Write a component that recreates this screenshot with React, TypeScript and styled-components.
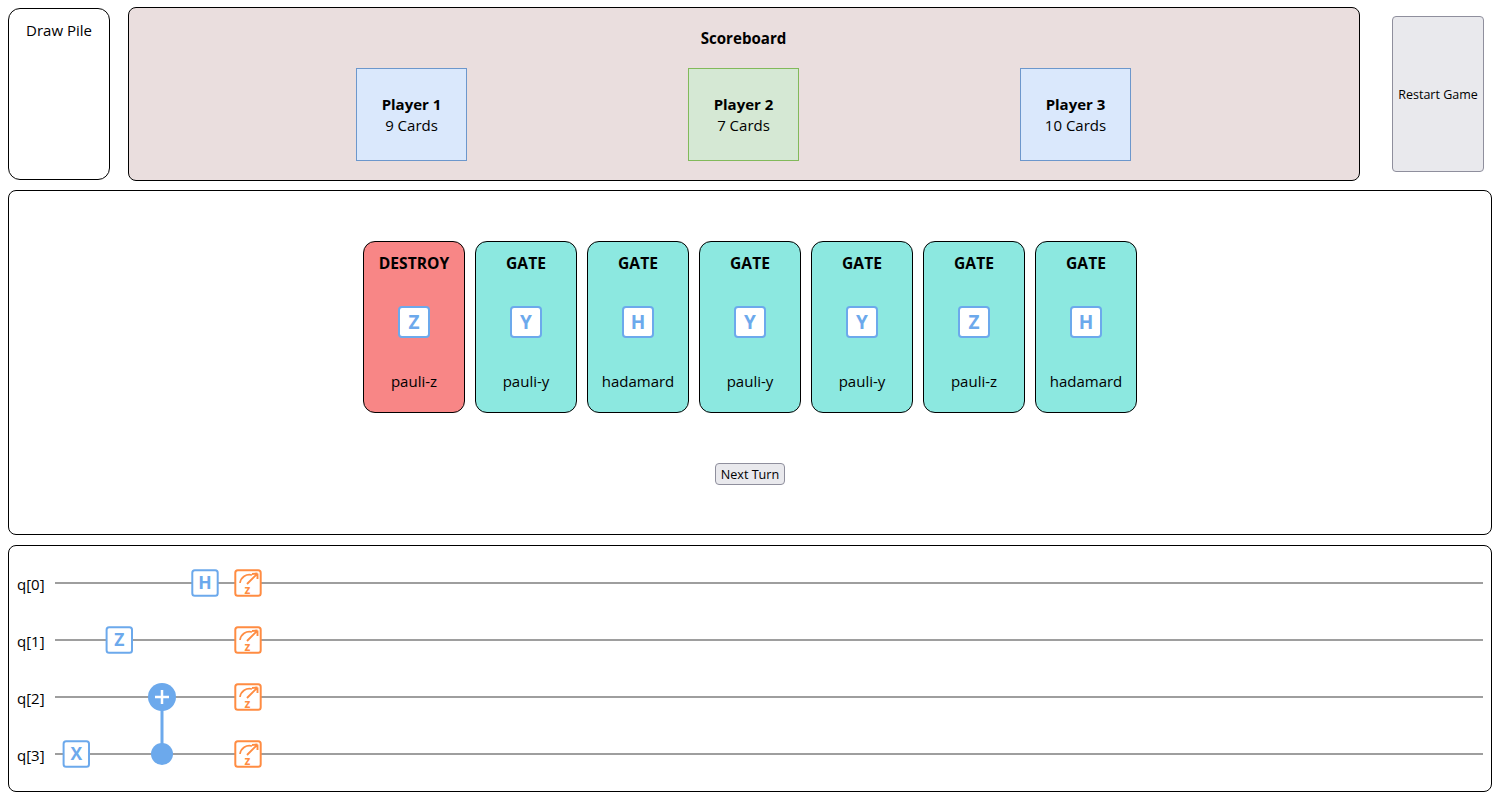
import React from "react";
import styled, { createGlobalStyle } from "styled-components";

const FONT = `"Open Sans", "Noto Sans", "Liberation Sans", sans-serif`;

const Global = createGlobalStyle`
  html, body { margin: 0; padding: 0; background: #fff; }
  body { font-family: ${FONT}; color: #000; }
  * { box-sizing: border-box; }
`;

const Page = styled.div`
  width: 1500px;
  height: 800px;
  padding: 7px 8px 8px;
  display: flex;
  flex-direction: column;
  overflow: hidden;
`;

const TopRow = styled.div`
  display: flex;
  align-items: flex-start;
  height: 174px;
`;

const DrawPile = styled.div`
  width: 102px;
  height: 172px;
  margin-top: 1px;
  flex: none;
  border: 1px solid #000;
  border-radius: 12px;
  padding-top: 11px;
  text-align: center;
  font-size: 15px;
  line-height: 20px;
`;

const Scoreboard = styled.section`
  width: 1232px;
  height: 174px;
  margin-left: 18px;
  flex: none;
  border: 1px solid #000;
  border-radius: 8px;
  background: #eadede;
  padding: 20px 7px 0 6px;
`;

const ScoreTitle = styled.h2`
  margin: 0 0 20px;
  font-size: 15.1px;
  line-height: 20px;
  font-weight: 700;
  text-align: center;
`;

const Players = styled.div`
  display: flex;
  justify-content: space-evenly;
`;

const PlayerBox = styled.div<{ $active?: boolean }>`
  width: 111px;
  height: 93px;
  border: 1px solid ${(p) => (p.$active ? "#82b95a" : "#6c97cc")};
  background: ${(p) => (p.$active ? "#d5e8d4" : "#dae8fc")};
  display: flex;
  flex-direction: column;
  align-items: center;
  justify-content: center;
  font-size: 15px;
  line-height: 21px;
`;

const PlayerName = styled.strong`
  font-weight: 700;
`;

const RestartButton = styled.button`
  width: 92px;
  height: 156px;
  margin: 9px 0 0 32px;
  flex: none;
  padding: 0;
  border: 1px solid #8f8f9d;
  border-radius: 4px;
  background: #e9e9ed;
  font-family: ${FONT};
  font-size: 12.5px;
  color: #000;
`;

const HandPanel = styled.section`
  height: 345px;
  margin-top: 9px;
  border: 1px solid #000;
  border-radius: 8px;
  padding-top: 50px;
  display: flex;
  flex-direction: column;
  align-items: center;
`;

const Hand = styled.div`
  display: flex;
  gap: 10px;
`;

const Card = styled.article<{ $kind: "gate" | "destroy" }>`
  width: 102px;
  height: 172px;
  border: 1px solid #000;
  border-radius: 12px;
  background: ${(p) => (p.$kind === "destroy" ? "#f88686" : "#8ce8e0")};
  display: flex;
  flex-direction: column;
  align-items: center;
  padding-top: 11px;
`;

const CardTitle = styled.div`
  font-size: 15.6px;
  line-height: 20px;
  font-weight: 700;
`;

const GateBox = styled.div`
  width: 32px;
  height: 32px;
  margin-top: 33px;
  border: 2px solid #6ca9ec;
  border-radius: 4px;
  background: #fff;
  color: #6ca9ec;
  display: flex;
  align-items: center;
  justify-content: center;
  font-size: 19px;
  font-weight: 700;
  line-height: 1;
`;

const CardName = styled.div`
  margin-top: 33px;
  font-size: 15px;
  line-height: 20px;
`;

const NextButton = styled.button`
  width: 70px;
  height: 22px;
  margin-top: 50px;
  padding: 1px 0 0;
  border: 1px solid #8f8f9d;
  border-radius: 4px;
  background: #e9e9ed;
  font-family: ${FONT};
  font-size: 12.6px;
  line-height: 18px;
  color: #000;
`;

const CircuitPanel = styled.section`
  height: 247px;
  margin-top: 10px;
  border: 1px solid #000;
  border-radius: 8px;
  overflow: hidden;
`;

const CircuitSvg = styled.svg`
  display: block;
  width: 1482px;
  height: 245px;
`;

const QubitLabel = styled.text`
  font-family: ${FONT};
  font-size: 15px;
  fill: #000;
`;

const GateLetter = styled.text`
  font-family: ${FONT};
  font-size: 17.5px;
  font-weight: 700;
  fill: #6ca9ec;
  text-anchor: middle;
`;

const MeasureLetter = styled.text`
  font-family: ${FONT};
  font-size: 12px;
  font-weight: 700;
  fill: #ff8c42;
  text-anchor: middle;
`;

const BLUE = "#6ca9ec";
const ORANGE = "#ff8c42";
// svg coordinates = page coordinates minus the panel's inner origin (9, 546)
const OX = 9;
const OY = 546;
const WIRES = [583, 640, 697, 754];

function Gate({ cx, cy, label }: { cx: number; cy: number; label: string }) {
  return (
    <g transform={`translate(${cx - OX} ${cy - OY})`}>
      <rect x={-12.7} y={-12.7} width={25.4} height={25.4} rx={2.5} fill="#fff" stroke={BLUE} strokeWidth={2} />
      <GateLetter x={0} y={6.3}>{label}</GateLetter>
    </g>
  );
}

function Measure({ cy }: { cy: number }) {
  return (
    <g transform={`translate(${248 - OX} ${cy - OY})`}>
      <rect x={-12.7} y={-12.7} width={25.4} height={25.4} rx={2.5} fill="#fff" stroke={ORANGE} strokeWidth={2} />
      <path d="M-8 0 A 9.5 9.5 0 0 1 4 -8" fill="none" stroke={ORANGE} strokeWidth={1.7} />
      <path d="M-1 1 L9 -9 M9.5 -9.5 L4 -9 M9.5 -9.5 L9.5 -4" fill="none" stroke={ORANGE} strokeWidth={1.9} />
      <MeasureLetter x={-0.5} y={11}>z</MeasureLetter>
    </g>
  );
}

const cards: { kind: "gate" | "destroy"; title: string; symbol: string; name: string }[] = [
  { kind: "destroy", title: "DESTROY", symbol: "Z", name: "pauli-z" },
  { kind: "gate", title: "GATE", symbol: "Y", name: "pauli-y" },
  { kind: "gate", title: "GATE", symbol: "H", name: "hadamard" },
  { kind: "gate", title: "GATE", symbol: "Y", name: "pauli-y" },
  { kind: "gate", title: "GATE", symbol: "Y", name: "pauli-y" },
  { kind: "gate", title: "GATE", symbol: "Z", name: "pauli-z" },
  { kind: "gate", title: "GATE", symbol: "H", name: "hadamard" },
];

const players = [
  { name: "Player 1", cards: "9 Cards", active: false },
  { name: "Player 2", cards: "7 Cards", active: true },
  { name: "Player 3", cards: "10 Cards", active: false },
];

export default function App() {
  return (
    <Page>
      <Global />
      <TopRow>
        <DrawPile>Draw Pile</DrawPile>
        <Scoreboard>
          <ScoreTitle>Scoreboard</ScoreTitle>
          <Players>
            {players.map((p) => (
              <PlayerBox key={p.name} $active={p.active}>
                <PlayerName>{p.name}</PlayerName>
                <span>{p.cards}</span>
              </PlayerBox>
            ))}
          </Players>
        </Scoreboard>
        <RestartButton>Restart Game</RestartButton>
      </TopRow>
      <HandPanel>
        <Hand>
          {cards.map((c, i) => (
            <Card key={i} $kind={c.kind}>
              <CardTitle>{c.title}</CardTitle>
              <GateBox>{c.symbol}</GateBox>
              <CardName>{c.name}</CardName>
            </Card>
          ))}
        </Hand>
        <NextButton>Next Turn</NextButton>
      </HandPanel>
      <CircuitPanel>
        <CircuitSvg viewBox="0 0 1482 245">
          {WIRES.map((y, i) => (
            <g key={y}>
              <QubitLabel x={17 - OX} y={y + 7 - OY}>{`q[${i}]`}</QubitLabel>
              <line x1={55 - OX} x2={1483 - OX} y1={y - OY} y2={y - OY} stroke="#9e9e9e" strokeWidth={2} />
            </g>
          ))}
          <Gate cx={205} cy={583} label="H" />
          <Gate cx={119.3} cy={640} label="Z" />
          <Gate cx={76.3} cy={754} label="X" />
          <line x1={162 - OX} x2={162 - OX} y1={697 - OY} y2={754 - OY} stroke={BLUE} strokeWidth={3} />
          <circle cx={162 - OX} cy={697 - OY} r={14} fill={BLUE} />
          <path d={`M${162 - OX - 7} ${697 - OY} h14 M${162 - OX} ${697 - OY - 7} v14`} stroke="#fff" strokeWidth={2.5} />
          <circle cx={162 - OX} cy={754 - OY} r={11} fill={BLUE} />
          {WIRES.map((y) => (
            <Measure key={y} cy={y} />
          ))}
        </CircuitSvg>
      </CircuitPanel>
    </Page>
  );
}
